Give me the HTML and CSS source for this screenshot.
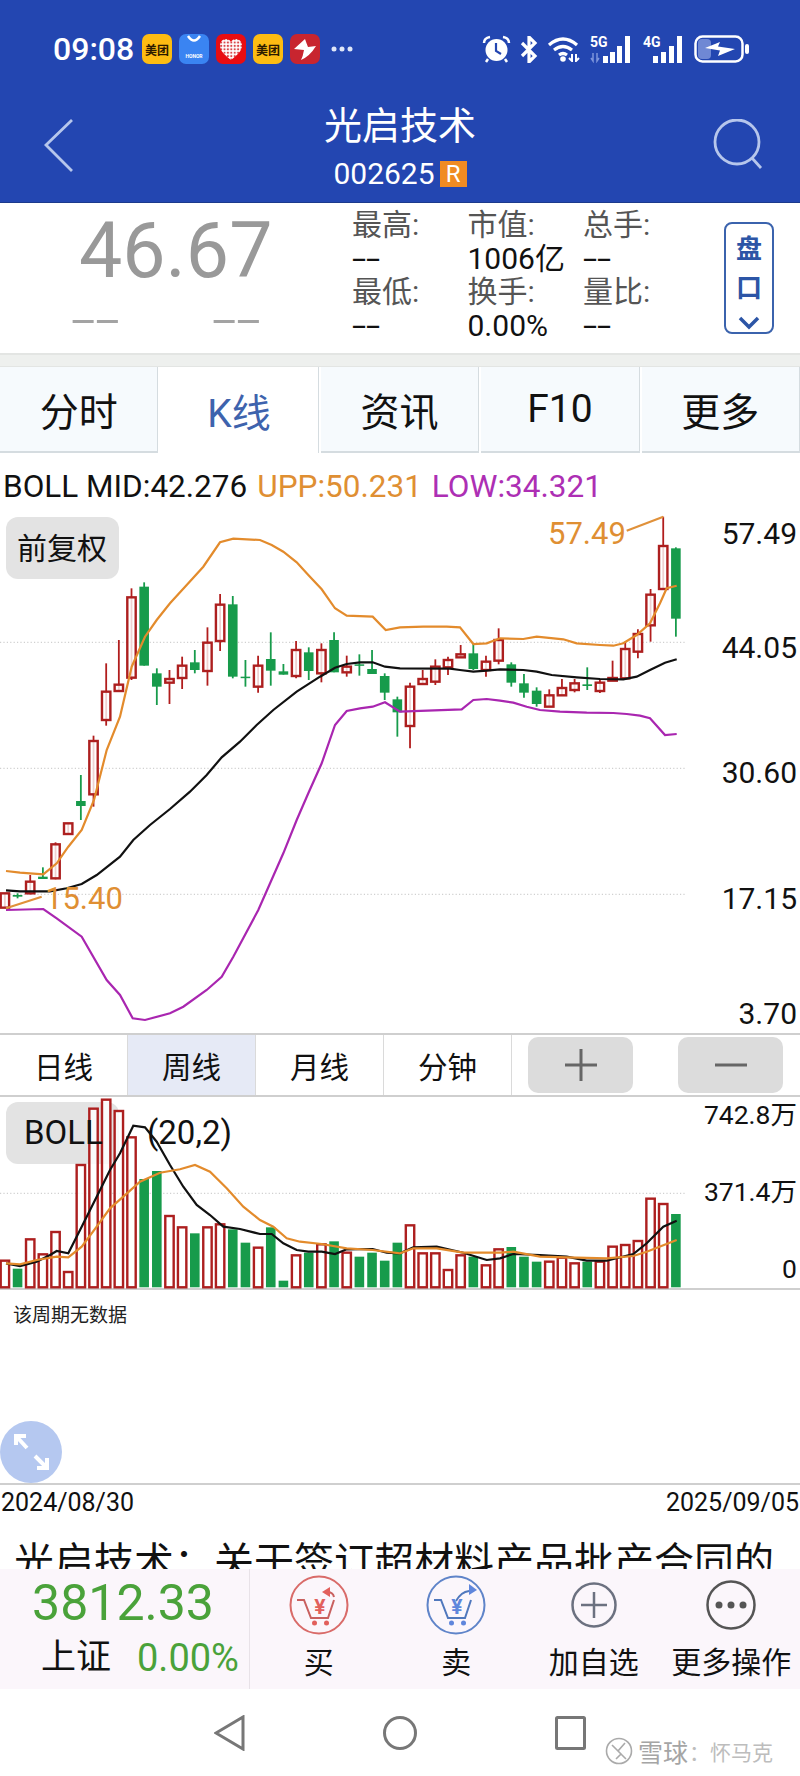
FILE: index.html
```html
<!DOCTYPE html>
<html lang="zh-CN">

<head>
    <meta charset="UTF-8">
    <title>光启技术</title>
    <link rel="stylesheet" href="styles.css">
</head>

<body>
    <div class="page">
        <header class="head">
            <div class="status">
                <div class="status-left">
                    <span class="time">09:08</span>
                    <span class="app app-yellow">美团</span>
                    <span class="app app-honor">
                        <svg width="30" height="18" viewBox="0 0 30 18"><path d="M9 2q6 9 12 0" class="stroke-w2"/></svg>
                        <span class="honor-text">HONOR</span>
                    </span>
                    <span class="app app-red">
                        <svg width="30" height="30" viewBox="0 0 30 30">
                            <defs>
                                <pattern id="heartDots" width="3.4" height="3.4" patternUnits="userSpaceOnUse">
                                    <rect width="3.4" height="3.4" fill="#fff"/>
                                    <circle cx="1.7" cy="1.7" r="1.1" fill="#d9474b"/>
                                </pattern>
                            </defs>
                            <path d="M15 26C9 21 4 17 4 11.500C4 7.500 7 5 10 5c2.300 0 4 1 5 3c1-2 2.700-3 5-3c3 0 6 2.500 6 6.500C26 17 21 21 15 26z" fill="url(#heartDots)"/>
                        </svg>
                    </span>
                    <span class="app app-yellow">美团</span>
                    <span class="app app-crimson">
                        <svg width="30" height="30" viewBox="0 0 30 30"><path d="M15 5L4 15l10 1q-1 6-3 10q9-4 15-14l-8 1q-2-5-3-8z" fill="#fff"/></svg>
                    </span>
                    <span class="more-dots">
                        <svg width="22" height="6" viewBox="0 0 22 6"><circle cx="3" cy="3" r="2.500"/><circle cx="11" cy="3" r="2.500"/><circle cx="19" cy="3" r="2.500"/></svg>
                    </span>
                </div>
                <div class="status-right">
                    <svg width="29" height="28" viewBox="0 0 29 28">
                        <circle cx="14.500" cy="15" r="11" fill="#fff"/>
                        <path d="M14 8v8l5 3" class="stroke-blue"/>
                        <path d="M2 8q0-5 6-6M27 8q0-5-6-6M6 24l-2 3M23 24l2 3" class="stroke-w2"/>
                    </svg>
                    <svg width="18" height="27" viewBox="0 0 18 27"><path d="M2 7l13 13l-6 6V1l6 6L2 20" class="stroke-w2 thick"/></svg>
                    <svg width="34" height="26" viewBox="0 0 34 26">
                        <path d="M2 9q14-12 28 0M7 14q9-7 18 0M12 19q4-3 8 0" class="stroke-w2 thick"/>
                        <circle cx="16" cy="23" r="2.800" fill="#fff"/>
                        <path d="M25 18v7l-3-3M29 18v7l3-3" class="stroke-w2 thin"/>
                    </svg>
                    <div class="signal">
                        <span class="net-label">5G</span>
                        <svg width="44" height="28" viewBox="0 0 44 28">
                            <path d="M3 18v8l-2-3M7 18v8l2-3" class="stroke-dim"/>
                            <rect x="13" y="21" width="5" height="7" fill="#fff"/>
                            <rect x="20" y="17" width="5" height="11" fill="#fff"/>
                            <rect x="27" y="11" width="5" height="17" fill="#fff"/>
                            <rect x="35" y="1" width="5" height="27" fill="#fff"/>
                        </svg>
                    </div>
                    <div class="signal">
                        <span class="net-label">4G</span>
                        <svg width="42" height="28" viewBox="0 0 42 28">
                            <rect x="10" y="21" width="5" height="7" fill="#fff"/>
                            <rect x="18" y="17" width="5" height="11" fill="#fff"/>
                            <rect x="26" y="11" width="5" height="17" fill="#fff"/>
                            <rect x="34" y="1" width="5" height="27" fill="#fff"/>
                        </svg>
                    </div>
                    <svg width="55" height="28" viewBox="0 0 55 28">
                        <rect x="4" y="4" width="13" height="20" rx="4" fill="#6f88d4"/>
                        <rect x="1.500" y="1.500" width="47" height="25" rx="7" class="stroke-w2"/>
                        <rect x="51" y="9" width="4" height="10" rx="2" fill="#fff"/>
                        <path d="M11 13L26 7L24 11.500L41 14L24 21L26 15.500z" fill="#fff"/>
                    </svg>
                </div>
            </div>
            <div class="titlebar">
                <div class="titlebar-left">
                    <svg width="30" height="53" viewBox="0 0 30 53"><path d="M28 1L2 26l26 26" class="stroke-light"/></svg>
                </div>
                <div class="title-box">
                    <div class="title">光启技术</div>
                    <div class="code">002625<span class="r-badge">R</span></div>
                </div>
                <div class="titlebar-right">
                    <svg width="50" height="50" viewBox="0 0 50 50"><circle cx="24" cy="23" r="22" class="stroke-light"/><path d="M39 39l9 10" class="stroke-light"/></svg>
                </div>
            </div>
        </header>

        <section class="quote">
            <div class="price-box">
                <div class="price">46.67</div>
                <div class="price-dashes"><span class="big-dash">--</span><span class="big-dash">--</span></div>
            </div>
            <div class="quote-grid">
                <span class="q-label">最高:</span><span class="q-label">市值:</span><span class="q-label">总手:</span>
                <span><i class="dash">--</i></span><span>1006亿</span><span><i class="dash">--</i></span>
                <span class="q-label">最低:</span><span class="q-label">换手:</span><span class="q-label">量比:</span>
                <span><i class="dash">--</i></span><span>0.00%</span><span><i class="dash">--</i></span>
            </div>
            <div class="pankou">
                <span>盘</span>
                <span>口</span>
                <svg width="22" height="14" viewBox="0 0 22 14"><path d="M2 2l9 9l9-9"/></svg>
            </div>
        </section>

        <div class="band"></div>

        <nav class="tabs">
            <div class="tab">分时</div>
            <div class="tab active">K线</div>
            <div class="tab">资讯</div>
            <div class="tab">F10</div>
            <div class="tab">更多</div>
        </nav>

        <div class="legend">
            <span>BOLL MID:42.276</span>
            <span class="c-orange">UPP:50.231</span>
            <span class="c-purple">LOW:34.321</span>
        </div>

        <div class="kchart">
            <svg id="kSvg" width="800" height="523" viewBox="0 0 800 523">
                <rect x="6" y="7" width="113" height="62" rx="12" class="pill"/>
                <text x="17" y="49" class="pill-text">前复权</text>
                <g id="kGrid"></g>
                <g id="kCandles"></g>
                <g id="kLines"></g>
                <text x="548" y="34" class="axis-note">57.49</text>
                <text x="45" y="399" class="axis-note">15.40</text>
                <text x="797" y="34" class="axis">57.49</text>
                <text x="797" y="148" class="axis">44.05</text>
                <text x="797" y="273" class="axis">30.60</text>
                <text x="797" y="399" class="axis">17.15</text>
                <text x="797" y="514" class="axis">3.70</text>
            </svg>
        </div>

        <div class="periods">
            <div class="period">日线</div>
            <div class="period active">周线</div>
            <div class="period">月线</div>
            <div class="period">分钟</div>
            <div class="zoom-btns">
                <div class="zoom-btn"><svg width="32" height="32" viewBox="0 0 32 32"><path d="M0 16h32M16 0v32"/></svg></div>
                <div class="zoom-btn"><svg width="32" height="32" viewBox="0 0 32 32"><path d="M0 16h32"/></svg></div>
            </div>
        </div>

        <div class="vchart">
            <svg id="vSvg" width="800" height="193" viewBox="0 67 800 193">
                <rect x="6" y="72" width="113" height="62" rx="12" class="pill"/>
                <g id="vGrid"></g>
                <g id="vBars"></g>
                <text x="24" y="114" class="pill-text wide">BOLL</text>
                <text x="147" y="114" class="pill-text wide">(20,2)</text>
                <g id="vLines"></g>
                <text x="797" y="94" class="axis small">742.8万</text>
                <text x="797" y="171" class="axis small">371.4万</text>
                <text x="797" y="248" class="axis small">0</text>
            </svg>
        </div>

        <div class="lower">
            <div class="no-data">该周期无数据</div>
            <div class="expand">
                <svg width="62" height="62" viewBox="0 0 62 62"><path d="M16 24V15h10M16 15l11 12M47 37v10H37M47 47L35 35"/></svg>
            </div>
        </div>

        <div class="dates">
            <span>2024/08/30</span>
            <span>2025/09/05</span>
        </div>

        <div class="news">光启技术：关于签订超材料产品批产合同的</div>

        <div class="bar">
            <div class="index">
                <div class="index-num">3812.33</div>
                <div class="index-row">
                    <span class="index-name">上证</span>
                    <span class="index-pct">0.00%</span>
                </div>
            </div>
            <div class="action">
                <div class="action-icon">
                    <svg width="60" height="60" viewBox="0 0 60 60" class="cart cart-buy">
                        <circle cx="30" cy="30" r="28.500"/>
                        <path d="M8 25h7l7 18h17l6-18"/>
                        <path d="M45 22q-1-5-7-5" class="arrow-tail"/>
                        <path d="M33 17l8-5v10z" class="fill"/>
                        <circle cx="25.500" cy="48" r="2.500" class="fill"/>
                        <circle cx="37.500" cy="48" r="2.500" class="fill"/>
                        <text x="31" y="39" class="yen">¥</text>
                    </svg>
                </div>
                <div class="action-label">买</div>
            </div>
            <div class="action">
                <div class="action-icon">
                    <svg width="60" height="60" viewBox="0 0 60 60" class="cart cart-sell">
                        <circle cx="30" cy="30" r="28.500"/>
                        <path d="M8 25h7l7 18h17l6-18"/>
                        <path d="M30 26q5-9 13-10" class="arrow-tail"/>
                        <path d="M51 15l-8-6v11z" class="fill"/>
                        <circle cx="25.500" cy="48" r="2.500" class="fill"/>
                        <circle cx="37.500" cy="48" r="2.500" class="fill"/>
                        <text x="31" y="39" class="yen">¥</text>
                    </svg>
                </div>
                <div class="action-label">卖</div>
            </div>
            <div class="action">
                <div class="action-icon">
                    <svg width="46" height="46" viewBox="0 0 46 46" class="ring ring-add"><circle cx="23" cy="23" r="21.500"/><path d="M10 23h26M23 10v26"/></svg>
                </div>
                <div class="action-label">加自选</div>
            </div>
            <div class="action">
                <div class="action-icon">
                    <svg width="50" height="50" viewBox="0 0 50 50" class="ring ring-more"><circle cx="25" cy="25" r="23.500"/><circle cx="13" cy="25" r="3.500" class="dot"/><circle cx="25" cy="25" r="3.500" class="dot"/><circle cx="37" cy="25" r="3.500" class="dot"/></svg>
                </div>
                <div class="action-label">更多操作</div>
            </div>
        </div>

        <div class="sysnav">
            <svg width="31" height="36" viewBox="0 0 31 36"><path d="M29 2v32L2 18z"/></svg>
            <svg width="34" height="36" viewBox="0 0 34 36"><circle cx="17" cy="18" r="15.500"/></svg>
            <svg width="31" height="34" viewBox="0 0 31 34"><rect x="1.500" y="1.500" width="28" height="31" rx="1"/></svg>
        </div>

        <div class="watermark">
            <svg width="28" height="28" viewBox="0 0 28 28"><circle cx="14" cy="14" r="12.500"/><path d="M7 8l9 9l-5 5M20 6l-7 8l8 8"/></svg>
            <span class="wm-brand">雪球</span>
            <span class="wm-name">：怀马克</span>
        </div>
    </div>

    <script>
        // candles: type, wick top, body top, body bottom, wick bottom (measured at 3x)
        const candles = [
            ['r', 1150, 1150, 1193, 1193], ['g', 1150, 1155, 1160, 1165], ['r', 1095, 1115, 1150, 1153],
            ['g', 1072, 1100, 1107, 1107], ['r', 997, 1003, 1105, 1108], ['r', 940, 940, 972, 972],
            ['g', 795, 873, 888, 930], ['r', 677, 693, 853, 890], ['r', 460, 545, 630, 647],
            ['r', 390, 524, 543, 543], ['r', 235, 262, 503, 510], ['g', 217, 230, 467, 467],
            ['g', 475, 490, 530, 585], ['r', 480, 507, 518, 582], ['r', 440, 467, 504, 537],
            ['g', 420, 457, 480, 490], ['r', 352, 398, 483, 527], ['r', 252, 284, 393, 423],
            ['g', 258, 283, 500, 505], ['g', 450, 500, 503, 530], ['r', 437, 467, 530, 548],
            ['g', 367, 447, 482, 527], ['g', 462, 484, 494, 494], ['r', 393, 420, 498, 505],
            ['g', 412, 427, 483, 510], ['r', 400, 420, 490, 517], ['g', 367, 390, 487, 487],
            ['r', 437, 470, 487, 500], ['g', 433, 463, 466, 497], ['g', 420, 477, 492, 492],
            ['g', 490, 498, 548, 570], ['g', 560, 568, 607, 680], ['r', 518, 530, 648, 715],
            ['r', 480, 507, 522, 522], ['r', 448, 470, 515, 525], ['r', 440, 450, 472, 495],
            ['r', 405, 433, 442, 442], ['g', 400, 430, 477, 480], ['r', 437, 455, 480, 500],
            ['r', 355, 390, 452, 463], ['g', 457, 463, 518, 530], ['g', 492, 520, 548, 563],
            ['g', 532, 542, 582, 590], ['r', 538, 556, 590, 590], ['r', 507, 534, 556, 558],
            ['r', 507, 520, 540, 547], ['g', 472, 523, 528, 540], ['r', 510, 518, 543, 549],
            ['r', 452, 504, 512, 512], ['r', 395, 417, 505, 510], ['r', 358, 372, 425, 445],
            ['r', 237, 254, 346, 395], ['r', 20, 108, 237, 237], ['g', 112, 115, 326, 380]
        ];

        const kUpper = [18,1083, 60,1088, 130,1093, 170,1060, 205,1010, 245,960, 282,870, 320,720, 360,620, 395,470, 435,380, 470,330, 510,280, 560,225, 610,170, 660,97, 700,86, 780,90, 815,105, 850,125, 890,157, 925,195, 965,238, 1005,295, 1040,317, 1118,320, 1157,360, 1200,352, 1270,350, 1340,350, 1380,352, 1420,402, 1460,400, 1500,385, 1570,387, 1610,380, 1690,388, 1730,400, 1800,405, 1840,407, 1870,400, 1910,375, 1950,340, 1980,280, 2000,235, 2030,227];
        const kMid = [18,1141, 60,1144, 150,1144, 200,1135, 245,1122, 290,1095, 360,1040, 400,990, 450,945, 510,897, 570,845, 620,795, 665,742, 720,695, 770,645, 820,600, 890,545, 960,500, 1005,473, 1040,462, 1080,457, 1118,457, 1155,470, 1200,475, 1350,476, 1380,480, 1420,485, 1460,482, 1500,478, 1570,480, 1610,485, 1655,495, 1730,502, 1800,507, 1870,508, 1910,500, 1950,480, 1995,458, 2030,448];
        const kLow = [18,1200, 130,1197, 170,1225, 245,1280, 320,1410, 360,1455, 398,1525, 435,1530, 510,1510, 550,1490, 620,1440, 665,1400, 700,1340, 775,1200, 850,1030, 890,930, 925,850, 965,760, 1005,645, 1040,603, 1080,595, 1118,590, 1155,577, 1200,605, 1385,598, 1420,570, 1460,567, 1500,572, 1540,578, 1580,590, 1620,600, 1680,605, 1760,608, 1840,609, 1880,612, 1920,617, 1950,625, 1995,675, 2030,672];
        const noteLow = [18,1195, 125,1160];
        const noteHigh = [1880,62, 1990,20];

        const volumes = [
            ['r',692], ['g',716], ['r',628], ['r',673], ['r',606], ['r',726], ['r',405], ['r',236], ['r',209],
            ['r',243], ['r',322], ['g',447], ['g',423], ['r',558], ['r',592], ['g',610], ['r',592], ['r',583],
            ['g',598], ['g',638], ['r',653], ['g',592], ['g',752], ['r',676], ['g',668], ['r',643], ['g',634],
            ['r',668], ['g',680], ['g',668], ['g',692], ['g',638], ['r',586], ['r',670], ['r',670], ['r',720],
            ['r',676], ['g',680], ['r',706], ['r',658], ['g',651], ['g',680], ['g',695], ['r',695], ['r',683],
            ['r',700], ['g',695], ['r',695], ['r',650], ['r',645], ['r',633], ['r',506], ['r',522], ['g',552]
        ];
        const vBlack = [18,700, 60,708, 110,695, 150,675, 170,663, 205,670, 245,590, 290,500, 330,420, 360,370, 400,287, 435,292, 470,335, 510,405, 550,470, 590,525, 630,555, 670,590, 720,597, 780,612, 815,612, 850,640, 890,660, 925,665, 965,665, 1005,672, 1040,658, 1118,657, 1160,668, 1200,670, 1240,652, 1310,650, 1390,668, 1460,690, 1500,685, 1540,672, 1620,675, 1700,680, 1760,692, 1820,692, 1900,672, 1940,640, 1990,590, 2030,572];
        const vOrange = [18,700, 60,703, 110,690, 170,680, 205,682, 245,650, 290,590, 330,535, 370,500, 420,455, 480,428, 540,418, 585,405, 630,425, 680,475, 730,530, 780,570, 820,590, 860,625, 900,635, 965,642, 1040,655, 1118,660, 1200,670, 1240,655, 1310,655, 1390,668, 1500,668, 1540,665, 1620,680, 1700,682, 1820,685, 1900,678, 1940,665, 2030,630];

        const svgNs = 'http://www.w3.org/2000/svg';

        function addEl(parent, name, attrs) {
            let el = document.createElementNS(svgNs, name);
            for (let key in attrs) {
                el.setAttribute(key, attrs[key]);
            }
            parent.appendChild(el);
            return el;
        }

        function candleX(i) {
            return 4.9 + 12.66 * i;
        }

        function addLine(parent, pts, cls) {
            let out = [];
            for (let i = 0; i < pts.length; i += 2) {
                out.push((pts[i] / 3).toFixed(1) + ',' + (pts[i + 1] / 3).toFixed(1));
            }
            addEl(parent, 'polyline', { points: out.join(' '), class: cls });
        }

        function addBody(parent, type, x, top, bottom) {
            if (type === 'g') {
                addEl(parent, 'rect', { x: x - 4.8, y: top, width: 9.6, height: Math.max(bottom - top, 1.5), class: 'fill-green' });
            } else {
                addEl(parent, 'rect', { x: x - 4.2, y: top, width: 8.4, height: Math.max(bottom - top, 1), class: 'hollow-red' });
            }
        }

        let kGrid = document.getElementById('kGrid');
        [132.3, 258.3, 384.3].forEach(y => {
            addEl(kGrid, 'line', { x1: 0, x2: 685, y1: y, y2: y, class: 'grid' });
        });

        let kCandles = document.getElementById('kCandles');
        for (let i = 0; i < candles.length; i++) {
            let c = candles[i];
            let x = candleX(i);
            addEl(kCandles, 'line', { x1: x, x2: x, y1: c[1] / 3, y2: c[4] / 3, class: c[0] === 'g' ? 'wick-green' : 'wick-red' });
            addBody(kCandles, c[0], x, c[2] / 3, c[3] / 3);
        }

        let kLines = document.getElementById('kLines');
        addLine(kLines, kUpper, 'ln ln-orange');
        addLine(kLines, kMid, 'ln ln-black');
        addLine(kLines, kLow, 'ln ln-purple');
        addLine(kLines, noteLow, 'ln ln-note');
        addLine(kLines, noteHigh, 'ln ln-note');

        let vGrid = document.getElementById('vGrid');
        addEl(vGrid, 'line', { x1: 0, x2: 685, y1: 163.3, y2: 163.3, class: 'grid' });

        let vBars = document.getElementById('vBars');
        for (let i = 0; i < volumes.length; i++) {
            addBody(vBars, volumes[i][0], candleX(i), volumes[i][1] / 3, 257.3);
        }

        let vLines = document.getElementById('vLines');
        addLine(vLines, vBlack, 'ln ln-black');
        addLine(vLines, vOrange, 'ln ln-orange');
    </script>
</body>

</html>
```

FILE: styles.css
```css
* {
    box-sizing: border-box;
}

body {
    margin: 0;
    font-family: Roboto, "Noto Sans CJK SC", sans-serif;
    background: #fff;
    color: #111;
}

.page {
    position: relative;
    width: 800px;
    height: 1776px;
    overflow: hidden;
}

/* header */
.head {
    height: 203px;
    padding-top: 34px;
    background: #2346b1;
    color: #fff;
    border-bottom: 1px solid #1c3a8c;
}

.status {
    display: flex;
    justify-content: space-between;
    align-items: center;
    height: 30px;
    padding: 0 51px 0 53px;
}

.status-left {
    display: flex;
    align-items: center;
    gap: 7px;
}

.time {
    width: 82px;
    font-size: 32px;
    font-weight: 500;
}

.app {
    position: relative;
    display: flex;
    align-items: center;
    justify-content: center;
    width: 30px;
    height: 30px;
    border-radius: 7px;
    overflow: hidden;
}

.app-yellow {
    background: #fdbc12;
    color: #2b1a00;
    font-size: 12px;
    font-weight: 700;
}

.app-honor {
    flex-direction: column;
    justify-content: flex-start;
    background: #3a84f2;
}

.honor-text {
    font-size: 5px;
    font-weight: 700;
    line-height: 6px;
    margin-top: 1px;
}

.app-red {
    background: #e80d12;
}

.app-crimson {
    background: #c8252f;
}

.more-dots {
    display: flex;
    margin-left: 4px;
}

.more-dots circle {
    fill: #dfe6f8;
}

.status-right {
    display: flex;
    align-items: center;
    gap: 9px;
}

.signal {
    position: relative;
    display: flex;
}

.net-label {
    position: absolute;
    left: 0;
    top: -1px;
    font-size: 14px;
    font-weight: 700;
    line-height: 16px;
}

.stroke-w2 {
    fill: none;
    stroke: #fff;
    stroke-width: 2.5;
}

.stroke-w2.thick {
    stroke-width: 3.2;
}

.stroke-w2.thin {
    stroke-width: 2;
}

.stroke-blue {
    fill: none;
    stroke: #2346b1;
    stroke-width: 2.2;
}

.stroke-dim {
    fill: none;
    stroke: #7e95dc;
    stroke-width: 1.5;
}

.stroke-light {
    fill: none;
    stroke: #b6c6ec;
    stroke-width: 2.8;
}

.titlebar {
    display: grid;
    grid-template-columns: 1fr auto 1fr;
    align-items: start;
    padding: 36px 37px 0;
}

.titlebar-left {
    padding: 19px 0 0 7px;
}

.titlebar-right {
    justify-self: end;
    padding-top: 19px;
}

.title-box {
    display: flex;
    flex-direction: column;
    align-items: center;
}

.title {
    font-size: 38px;
    line-height: 52px;
}

.code {
    display: flex;
    align-items: center;
    margin-top: 8px;
    font-size: 30px;
    line-height: 28px;
    height: 28px;
}

.r-badge {
    display: flex;
    align-items: center;
    justify-content: center;
    width: 27px;
    height: 26px;
    margin-left: 5px;
    background: #f08b22;
    font-size: 24px;
}

/* price panel */
.quote {
    display: flex;
    height: 150px;
}

.price-box {
    width: 352px;
}

.price {
    padding-left: 79px;
    font-size: 77px;
    line-height: 74px;
    margin-top: 11px;
    color: #999;
}

.price-dashes {
    display: flex;
    gap: 95px;
    padding-left: 71px;
    height: 30px;
    align-items: center;
    margin-top: 18px;
}

.big-dash {
    display: inline-block;
    width: 46px;
    font-size: 40px;
    line-height: 30px;
    color: #a3a3a3;
    transform: scaleX(2.2);
    transform-origin: left center;
}

.quote-grid {
    display: grid;
    grid-template-columns: repeat(3, 115.5px);
    grid-auto-rows: 33.5px;
    padding-top: 5px;
    font-size: 30px;
    line-height: 33.5px;
    color: #111;
}

.q-label {
    color: #555;
}

.dash {
    display: inline-block;
    font-style: normal;
    transform: scaleX(1.7);
    transform-origin: left center;
}

.pankou {
    display: flex;
    flex-direction: column;
    align-items: center;
    width: 50px;
    height: 112px;
    margin: 19px 26px 0 auto;
    padding-top: 6px;
    border: 2px solid #3b63ad;
    border-radius: 8px;
    font-size: 26px;
    font-weight: 700;
    line-height: 39px;
    color: #2c55a6;
}

.pankou svg {
    margin-top: 8px;
    fill: none;
    stroke: #2c55a6;
    stroke-width: 3.5;
}

.band {
    height: 14px;
    background: #eef0ee;
    border-top: 2px solid #e3e5e3;
    border-bottom: 1px solid #e3e5e3;
}

/* tabs */
.tabs {
    display: flex;
    gap: 2px;
    height: 86px;
    background: #fff;
}

.tab {
    flex: 1;
    display: flex;
    align-items: center;
    justify-content: center;
    background: #f6fafd;
    border-right: 1px solid #d5dce0;
    border-bottom: 2px solid #d5dce0;
    font-size: 39px;
}

.tab.active {
    background: #fff;
    border-bottom: none;
    color: #3e63ad;
}

.legend {
    display: flex;
    gap: 10px;
    height: 57px;
    padding: 16px 0 0 3px;
    font-size: 31.5px;
    line-height: 36px;
    white-space: nowrap;
}

.c-orange {
    color: #df8f33;
}

.c-purple {
    color: #ad2fb4;
}

/* charts */
.kchart {
    height: 523px;
}

.kchart svg,
.vchart svg {
    display: block;
}

.pill {
    fill: #e3e3e3;
}

.pill-text {
    font-size: 30px;
    fill: #111;
}

.pill-text.wide {
    font-size: 33px;
}

.axis {
    font-size: 30px;
    fill: #111;
    text-anchor: end;
}

.axis.small {
    font-size: 26.5px;
}

.axis-note {
    font-size: 31px;
    fill: #df8f33;
}

.grid {
    stroke: #d0d0d0;
    stroke-width: 1.2;
    stroke-dasharray: 1.2 2.2;
}

.wick-red {
    stroke: #b11d1d;
    stroke-width: 1.8;
}

.wick-green {
    stroke: #179b4b;
    stroke-width: 1.8;
}

.fill-green {
    fill: #179b4b;
}

.hollow-red {
    fill: #fff;
    fill-opacity: 0.8;
    stroke: #ad1f1f;
    stroke-width: 2.4;
}

.ln {
    fill: none;
    stroke-width: 2.2;
}

.ln-orange {
    stroke: #e38b2c;
}

.ln-black {
    stroke: #111;
}

.ln-purple {
    stroke: #a926b0;
}

.ln-note {
    stroke: #e0913a;
}

.periods {
    display: flex;
    height: 64px;
    border-top: 2px solid #cfcfcf;
    border-bottom: 2px solid #cfcfcf;
}

.period {
    display: flex;
    align-items: center;
    justify-content: center;
    width: 128px;
    border-right: 1px solid #dadada;
    font-size: 29.5px;
}

.period.active {
    background: #e6eaf6;
}

.zoom-btns {
    display: flex;
    gap: 45px;
    padding: 2px 0 0 16px;
}

.zoom-btn {
    display: flex;
    align-items: center;
    justify-content: center;
    width: 105px;
    height: 56px;
    border-radius: 10px;
    background: #dcdcdc;
}

.zoom-btn path {
    fill: none;
    stroke: #666;
    stroke-width: 3;
}

.vchart {
    height: 193px;
    border-bottom: 2px solid #cfcfcf;
}

.lower {
    position: relative;
    height: 195px;
    padding: 14px 0 0 13px;
    border-bottom: 2px solid #cfcfcf;
}

.no-data {
    font-size: 19px;
    line-height: 24px;
    color: #222;
}

.expand {
    position: absolute;
    left: 0;
    top: 131px;
    width: 62px;
    height: 62px;
    border-radius: 50%;
    background: #b5c8f0;
}

.expand path {
    fill: none;
    stroke: #fff;
    stroke-width: 4;
}

.dates {
    display: flex;
    justify-content: space-between;
    height: 36px;
    padding: 0 1px 0 1px;
    font-size: 25px;
    line-height: 36px;
}

.news {
    height: 48px;
    padding: 18px 0 0 14px;
    overflow: hidden;
    font-size: 40px;
    line-height: 48px;
    white-space: nowrap;
    color: #111;
}

/* bottom bar */
.bar {
    display: flex;
    height: 120px;
    background: #fbf6fb;
}

.index {
    width: 250px;
    padding-top: 8px;
    border-right: 1px solid #e8e2e8;
}

.index-num {
    font-size: 50px;
    line-height: 52px;
    text-align: center;
    color: #4aa23a;
    padding-right: 3px;
}

.index-row {
    display: flex;
    align-items: center;
    gap: 26px;
    margin-top: 7px;
    padding-left: 41px;
    line-height: 44px;
}

.index-name {
    font-size: 35px;
}

.index-pct {
    font-size: 38px;
    color: #4aa23a;
}

.action {
    flex: 1;
    display: flex;
    flex-direction: column;
    align-items: center;
    padding-top: 4px;
}

.action-icon {
    display: flex;
    align-items: center;
    justify-content: center;
    height: 64px;
}

.action-label {
    margin-top: 6px;
    font-size: 30px;
    line-height: 40px;
}

.cart * {
    fill: none;
    stroke-width: 2;
}

.cart .fill {
    stroke: none;
}

.cart .yen {
    font-size: 21px;
    font-weight: 700;
    text-anchor: middle;
    stroke: none;
}

.cart-buy circle {
    stroke: #d96b69;
}

.cart-buy path {
    stroke: #c9605f;
}

.cart-buy .fill,
.cart-buy .yen {
    fill: #e2605c;
}

.cart-sell circle {
    stroke: #5f84c9;
}

.cart-sell path {
    stroke: #5078bd;
}

.cart-sell .fill,
.cart-sell .yen {
    fill: #5f86dc;
}

.ring * {
    fill: none;
    stroke-width: 2.5;
}

.ring-add * {
    stroke: #6c7180;
}

.ring-more * {
    stroke: #555;
}

.ring .dot {
    fill: #555;
    stroke: none;
}

/* system navigation */
.sysnav {
    display: flex;
    align-items: center;
    justify-content: center;
    gap: 138px;
    height: 87px;
}

.sysnav * {
    fill: none;
    stroke: #777;
    stroke-width: 3;
}

.watermark {
    position: absolute;
    left: 605px;
    top: 1737px;
    display: flex;
    align-items: center;
    gap: 5px;
    height: 28px;
}

.watermark svg * {
    fill: none;
    stroke: #aaa;
    stroke-width: 1.6;
}

.wm-brand {
    font-size: 25px;
    color: #a5a5a5;
    text-shadow: 1px 1px 0 #fff;
}

.wm-name {
    margin-left: -4px;
    font-size: 21px;
    color: #bdbdbd;
    text-shadow: 1px 1px 0 #fff;
}
```
